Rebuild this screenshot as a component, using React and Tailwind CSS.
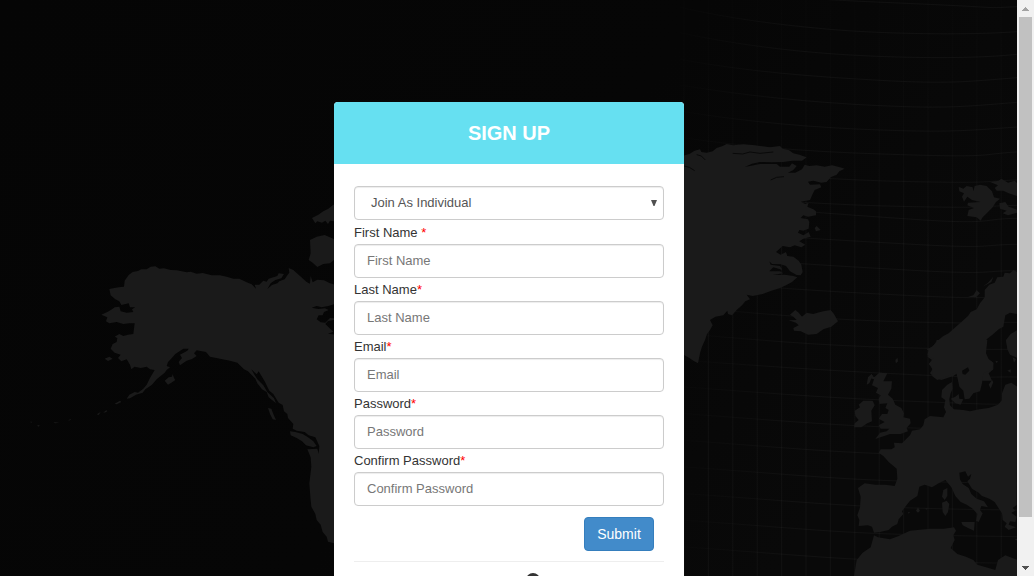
import React from "react";

const AMERICA =
  "M328 297 L356 292 L372 290 L374 272 L386 255 L398 246 L414 243 L424 238 L440 238 L452 230 L466 229 L478 236 L492 235 L512 240 L530 241 L560 247 L572 245 L590 251 L608 249 L635 256 L660 256 L680 260 L700 266 L718 266 L740 277 L755 283 L768 296 L764 284 L778 284 L790 272 L800 275 L806 266 L832 258 L836 250 L852 252 L844 265 L826 270 L812 280 L802 297 L816 285 L832 280 L838 274 L854 268 L862 256 L868 248 L866 234 L880 240 L900 258 L920 276 L930 281 L932 258 L938 277 L952 269 L972 271 L990 280 L1010 286 L1060 300 L1060 345 L1002 343 L985 348 L965 352 L950 348 L935 353 L955 357 L975 355 L986 360 L972 366 L968 376 L956 376 L950 388 L962 397 L976 398 L990 384 L1002 385 L1002 390 L984 393 L976 402 L1000 425 L984 431 L1060 440 L1060 1060 L1002 1060 L984 1055 L980 1040 L968 1026 L962 1004 L950 990 L946 972 L934 950 L931 920 L928 880 L934 830 L932 802 L922 778 L952 776 L956 792 L958 768 L946 742 L926 736 L914 726 L890 722 L878 716 L880 702 L864 684 L862 672 L852 664 L848 645 L836 638 L820 612 L808 602 L794 574 L776 544 L770 553 L754 538 L762 552 L772 568 L790 586 L802 606 L822 625 L828 640 L806 622 L800 606 L786 598 L772 580 L766 566 L744 544 L732 538 L712 518 L690 512 L660 506 L630 500 L618 486 L590 481 L582 490 L590 498 L576 507 L560 512 L540 526 L536 516 L546 504 L540 494 L562 482 L566 476 L550 476 L526 492 L512 508 L504 516 L500 528 L510 532 L500 540 L494 548 L470 568 L456 584 L436 598 L428 608 L408 614 L390 625 L380 626 L388 614 L404 606 L414 608 L430 596 L440 584 L450 564 L464 540 L450 538 L440 530 L422 534 L404 530 L394 538 L390 524 L380 508 L364 514 L354 504 L362 494 L344 488 L332 476 L338 462 L350 456 L352 444 L344 440 L358 432 L370 438 L384 434 L400 432 L404 400 L388 400 L370 402 L350 396 L328 400 L318 394 L322 382 L304 374 L322 366 L336 358 L344 352 L358 350 L362 364 L380 368 L400 366 L396 358 L406 352 L390 352 L386 340 L364 345 L358 334 L346 328 L332 316 Z M936 84 L955 74 L970 64 L985 56 L1000 44 L1060 30 L1060 100 L1002 94 L990 92 L984 102 L976 92 L966 98 L952 94 L946 100 Z M930 150 L950 140 L974 135 L1000 146 L1020 160 L1002 210 L990 220 L970 222 L952 231 L938 218 L926 210 L932 190 Z M494 572 L506 562 L516 560 L518 552 L522 564 L526 570 L514 578 L504 584 Z M314 506 L328 500 L338 506 L324 513 Z M804 654 L814 656 L820 672 L828 690 L818 688 L810 672 Z M870 724 L886 726 L908 732 L924 742 L940 754 L950 768 L940 772 L918 766 L906 754 L890 744 L872 736 Z M344 641 L360 632 L364 636 L350 643 Z M290 673 L302 666 L296 675 Z M310 668 L320 659 L320 666 Z M204 692 L212 686 L212 690 Z M112 704 L120 707 L114 710 Z M92 694 L97 697 L92 698 Z M160 696 L178 698 L166 700 Z";

const GREENLAND =
  "M0 90 L14 76 L28 72 L44 62 L60 58 L64 66 L80 68 L98 64 L110 54 L128 48 L140 42 L160 46 L190 43 L218 45 L246 49 L270 52 L300 48 L308 56 L326 60 L340 70 L358 74 L380 82 L366 92 L338 92 L310 96 L276 97 L240 96 L216 101 L194 111 L240 102 L290 102 L300 110 L328 110 L336 100 L350 108 L340 120 L324 128 L346 128 L366 118 L374 104 L388 108 L410 106 L434 110 L456 106 L480 112 L494 116 L478 124 L470 134 L452 142 L440 156 L424 158 L400 152 L384 155 L390 164 L420 163 L424 172 L404 180 L398 192 L390 210 L362 215 L376 222 L386 218 L382 230 L400 238 L408 244 L408 256 L384 260 L370 256 L362 264 L384 268 L388 276 L386 296 L370 302 L358 300 L354 308 L370 316 L386 306 L392 320 L370 326 L358 334 L376 344 L364 352 L344 346 L330 352 L308 348 L288 366 L302 374 L318 366 L322 378 L340 380 L356 392 L364 404 L368 426 L362 436 L350 435 L330 424 L318 408 L302 403 L276 402 L268 394 L272 404 L300 408 L308 420 L280 412 L268 424 L300 424 L310 430 L278 435 L314 434 L340 438 L352 442 L336 456 L318 466 L300 474 L270 484 L248 492 L218 498 L200 494 L210 508 L196 514 L186 526 L170 540 L156 556 L144 552 L142 542 L130 556 L106 560 L90 570 L98 586 L90 600 L80 614 L76 628 L66 650 L60 670 L54 700 L40 692 L28 684 L12 675 L0 660 Z M404 294 L410 288 L422 300 L408 304 Z M326 571 L350 570 L340 560 L330 554 L346 540 L356 548 L366 560 L380 548 L400 552 L412 548 L430 544 L452 540 L462 552 L474 574 L454 590 L430 598 L410 612 L384 614 L362 604 L342 602 L340 594 L356 586 L348 578 Z M836 170 L850 176 L860 168 L878 172 L880 184 L884 168 L900 164 L920 168 L936 184 L942 202 L960 206 L948 216 L938 232 L924 246 L908 262 L902 272 L890 262 L862 258 L866 240 L882 234 L862 226 L864 218 L902 216 L876 210 L862 200 L852 215 L846 200 L852 190 L838 184 Z M930 156 L956 152 L964 146 L984 158 L1004 152 L1012 160 L1012 198 L986 190 L970 182 L950 182 L944 174 L954 166 Z M958 220 L976 216 L986 230 L1004 236 L1012 240 L1012 248 L984 256 L968 250 L980 242 L960 236 Z M646 690 L652 684 L652 696 Z M188 70 L190 55 L192 70 Z";

const SCANDINAVIA =
  "M1012 426 L1000 420 L990 430 L974 428 L970 440 L952 442 L944 458 L928 464 L914 480 L914 502 L900 520 L890 538 L872 546 L864 558 L844 576 L826 592 L806 610 L790 618 L768 636 L758 650 L740 658 L756 668 L742 680 L756 690 L746 702 L758 716 L750 730 L766 744 L784 750 L820 738 L858 712 L862 724 L850 736 L862 752 L936 752 L926 730 L940 718 L940 698 L918 682 L914 656 L920 628 L940 612 L956 598 L970 590 L976 556 L990 548 L1012 552 Z M864 500 L880 496 L890 480 L900 490 L888 502 Z M908 470 L924 458 L940 440 L934 456 Z M978 630 L992 612 L1012 600 L1012 684 L990 674 L982 658 Z M568 744 L574 732 L582 742 L600 728 L618 730 L612 746 L600 752 Z";

const EUROPE =
  "M560 495 L548 504 L556 512 L544 518 L560 530 L556 546 L540 544 L536 554 L558 562 L536 570 L524 560 L530 550 L518 540 L516 520 L504 502 L494 486 L478 476 L456 468 L446 458 L426 446 L412 424 L420 416 L424 402 L414 410 L406 394 L388 398 L390 418 L398 432 L416 444 L424 462 L440 476 L462 484 L474 502 L454 498 L450 510 L458 520 L446 546 L438 542 L442 522 L428 506 L410 494 L392 486 L376 468 L364 442 L346 420 L326 430 L306 442 L284 434 L268 440 L262 468 L240 482 L226 500 L216 514 L220 522 L206 538 L202 552 L186 560 L176 570 L150 576 L132 578 L126 560 L114 556 L86 558 L88 540 L82 526 L90 502 L92 470 L84 444 L104 430 L136 434 L166 434 L194 438 L202 416 L200 386 L176 366 L160 348 L146 338 L152 328 L184 328 L194 322 L192 308 L216 310 L228 298 L240 286 L246 272 L270 268 L280 256 L284 238 L300 228 L340 232 L348 216 L342 202 L346 180 L334 172 L336 150 L352 134 L366 126 L368 146 L362 160 L358 178 L360 196 L372 208 L400 210 L420 214 L448 208 L476 204 L504 194 L516 180 L516 160 L526 134 L544 128 L562 140 Z M296 28 L318 10 L320 0 L472 0 L468 40 L476 58 L490 68 L488 90 L460 98 L456 130 L450 154 L430 160 L418 176 L404 178 L400 152 L388 140 L382 112 L378 96 L346 112 L322 120 L306 108 L308 90 L298 70 L310 56 L292 46 Z M362 176 L376 170 L386 162 L388 176 L400 178 L392 194 L376 190 Z M476 134 L486 120 L490 126 L482 146 Z M528 0 L562 0 L562 50 L544 44 L532 24 Z M548 52 L558 58 L552 68 Z M532 92 L542 88 L542 98 Z M496 62 L504 64 L500 70 Z M148 98 L172 100 L166 112 L160 124 L186 124 L184 146 L174 164 L188 176 L196 194 L214 204 L222 220 L220 232 L240 236 L242 250 L230 264 L234 274 L212 282 L180 282 L156 290 L136 297 L150 278 L170 274 L178 266 L152 266 L146 256 L164 246 L146 236 L156 222 L172 222 L176 210 L166 204 L172 190 L148 192 L146 176 L152 166 L138 158 L144 144 L126 136 L132 118 L140 106 Z M74 212 L90 202 L86 194 L100 182 L128 182 L134 196 L124 212 L126 244 L112 250 L94 262 L72 262 L74 250 L86 240 L76 228 Z M114 112 L124 102 L128 106 L118 130 L110 134 Z M196 62 L202 54 L204 64 L198 70 Z M340 450 L352 444 L352 468 L344 480 L336 470 Z M336 488 L350 482 L358 492 L354 516 L346 528 L338 516 Z M394 546 L420 546 L434 546 L432 572 L414 564 L398 556 Z M258 512 L264 502 L270 512 L264 518 Z M286 504 L294 506 L288 509 Z M234 516 L240 517 L236 521 Z M554 598 L562 596 L562 602 Z M72 708 L80 660 L98 638 L122 622 L132 586 L144 592 L180 598 L206 588 L240 572 L300 566 L342 566 L372 562 L378 572 L370 586 L374 600 L362 624 L382 642 L408 650 L430 660 L442 674 L468 682 L496 690 L504 660 L526 646 L562 660 L562 710 Z";

const MERIDIANS = Array.from({ length: 14 }, (_, i) => 683.5 + i * 24.4);

const PARALLELS = [
  "M0 -62 C200 -10 400 -2 700 11 S900 25 1011 20",
  "M0 22 C150 56 300 75 450 88 S850 107 1011 95",
  "M0 98 C150 130 300 150 450 161 S850 180 1011 163",
  "M0 178 C200 215 400 230 600 241 S850 246 1011 233",
  "M0 255 C200 288 400 308 600 317 S850 320 1011 307",
  "M0 333 C200 366 400 383 600 390 S850 393 1011 381",
  "M0 412 C250 448 450 458 700 465 S900 462 1011 456",
  "M0 492 C250 525 450 540 700 545 S900 544 1011 540",
  "M0 575 C250 602 450 615 700 620 S900 618 1011 616",
  "M0 600 C300 630 450 641 700 658 S900 656 1011 655",
  "M0 690 C300 710 450 719 700 733 S900 734 1011 733",
  "M0 765 C300 788 450 797 700 811 S900 812 1011 812",
  "M0 840 C300 866 450 875 700 887 S900 889 1011 889",
  "M0 920 C300 946 450 960 700 966 S900 967 1011 967",
  "M0 1000 C300 1026 450 1038 700 1044 S900 1048 1011 1048",
  "M0 1080 C300 1102 450 1112 700 1124 S900 1130 1011 1131",
  "M0 1160 C300 1182 450 1194 700 1204 S900 1212 1011 1213",
  "M0 1240 C300 1262 450 1276 700 1284 S900 1291 1011 1292",
  "M0 1320 C300 1342 450 1357 700 1364 S900 1370 1011 1371",
  "M0 1400 C300 1420 450 1438 700 1444 S900 1448 1011 1450",
  "M0 1480 C300 1500 450 1517 700 1524 S900 1528 1011 1530",
  "M0 1560 C300 1580 450 1598 700 1604 S900 1608 1011 1610",
  "M0 1640 C300 1660 450 1678 700 1684 S900 1688 1011 1690",
];

const FIELDS = [
  { label: "First Name ", placeholder: "First Name", type: "text" },
  { label: "Last Name", placeholder: "Last Name", type: "text" },
  { label: "Email", placeholder: "Email", type: "text" },
  { label: "Password", placeholder: "Password", type: "password" },
  { label: "Confirm Password", placeholder: "Confirm Password", type: "password" },
];

function WorldMap() {
  return (
    <svg className="absolute inset-0" width="1017" height="576" viewBox="0 0 1017 576" aria-hidden="true">
      <defs>
        <linearGradient id="sea" x1="0" y1="0" x2="1" y2="0.4">
          <stop offset="0" stopColor="#050505" />
          <stop offset="0.6" stopColor="#060606" />
          <stop offset="1" stopColor="#090909" />
        </linearGradient>
        <linearGradient id="fadeX" gradientUnits="userSpaceOnUse" x1="680" y1="0" x2="800" y2="0">
          <stop offset="0" stopColor="#ffffff" stopOpacity="0.005" />
          <stop offset="1" stopColor="#ffffff" stopOpacity="0.035" />
        </linearGradient>
        <linearGradient id="fadeParallel" gradientUnits="userSpaceOnUse" x1="0" y1="0" x2="360" y2="0">
          <stop offset="0" stopColor="#ffffff" stopOpacity="0.005" />
          <stop offset="1" stopColor="#ffffff" stopOpacity="0.035" />
        </linearGradient>
        <linearGradient id="fadeMeridian" gradientUnits="userSpaceOnUse" x1="0" y1="0" x2="0" y2="260">
          <stop offset="0" stopColor="#ffffff" stopOpacity="0.006" />
          <stop offset="0.5" stopColor="#ffffff" stopOpacity="0.015" />
          <stop offset="1" stopColor="#ffffff" stopOpacity="0.032" />
        </linearGradient>
      </defs>
      <rect width="1017" height="576" fill="url(#sea)" />
      <g fill="url(#fadeMeridian)">
        {MERIDIANS.map((x) => (
          <rect key={x} x={x} y="0" width="1" height="576" />
        ))}
      </g>
      <g transform="translate(680 0) scale(0.33333)" stroke="url(#fadeParallel)" strokeWidth="3" fill="none">
        {PARALLELS.map((d) => (
          <path key={d} d={d} />
        ))}
      </g>
      <g fill="#1a1a1a">
        <path transform="translate(0 190) scale(0.33333)" d={AMERICA} />
        <path transform="translate(680 130) scale(0.33333)" d={GREENLAND} />
        <path transform="translate(680 130) scale(0.33333)" d={SCANDINAVIA} />
        <path transform="translate(830 340) scale(0.33333)" d={EUROPE} />
      </g>
      <g transform="translate(830 340) scale(0.33333)" fill="#090909">
        <path d="M396 92 L414 82 L418 92 L406 104 L398 102 Z" />
      </g>
      <g transform="translate(680 130) scale(0.33333)" stroke="#090909" strokeWidth="3" fill="none">
        <path d="M12 108 L28 112 L44 122 M158 70 L188 72 L210 66 L240 70 L280 66 M272 150 L290 142 L312 140 M50 74 L64 78 L76 90" />
      </g>
    </svg>
  );
}

function Scrollbar() {
  return (
    <div className="flex h-full w-[17px] shrink-0 flex-col items-center bg-[#f1f1f1]">
      <div className="flex h-[17px] w-full shrink-0 items-center justify-center">
        <svg width="7" height="4" viewBox="0 0 7 4" fill="#a3a3a3" shapeRendering="crispEdges">
          <path d="M3 0h1v1h1v1h1v1h1v1H0V3h1V2h1V1h1z" />
        </svg>
      </div>
      <div className="h-[500px] w-[13px] shrink-0 bg-[#c1c1c1]" />
      <div className="flex-1" />
      <div className="flex h-[17px] w-full shrink-0 items-center justify-center">
        <svg width="7" height="4" viewBox="0 0 7 4" fill="#505050" shapeRendering="crispEdges">
          <path d="M0 0h7v1H6v1H5v1H4v1H3V3H2V2H1V1H0z" />
        </svg>
      </div>
    </div>
  );
}

export default function App() {
  return (
    <div className="flex h-[576px] w-[1034px] overflow-hidden bg-[#060606] font-['Liberation_Sans',Arial,sans-serif] text-[13px] text-[#333333]">
      <main className="relative flex h-full w-[1017px] shrink-0 justify-center overflow-hidden pt-[102px]">
        <WorldMap />
        <form className="relative ml-px h-[600px] w-[350px] shrink-0 rounded bg-white">
          <h1 className="flex h-[62px] items-center justify-center rounded-t bg-[#66e0f1] text-[20px] font-bold text-white">
            SIGN UP
          </h1>
          <div className="flex flex-col px-5 pt-[22px]">
            <div className="mb-px flex h-[34px] items-center justify-between rounded border border-[#cccccc] bg-white pr-[6px] pl-4 leading-5 text-[#555555] shadow-[inset_0_1px_1px_rgba(0,0,0,0.075)]">
              <span>Join As Individual</span>
              <svg width="6" height="6" viewBox="0 0 6 6" fill="#505050">
                <path d="M0 0h6L3.5 6h-1z" />
              </svg>
            </div>
            {FIELDS.map(({ label, placeholder, type }) => (
              <label key={placeholder} className="flex flex-col">
                <span className="h-[23px] leading-[23px] whitespace-pre">
                  {label}
                  <span className="text-[#ff0000]">*</span>
                </span>
                <input
                  type={type}
                  placeholder={placeholder}
                  className="h-[34px] w-full rounded border border-[#cccccc] bg-white px-3 pb-[2px] shadow-[inset_0_1px_1px_rgba(0,0,0,0.075)] outline-none placeholder:text-[#777777]"
                />
              </label>
            ))}
            <button
              type="button"
              className="mt-[11px] mr-[10px] h-[34px] w-[70px] self-end rounded border border-[#357ebd] bg-[#428bca] text-sm leading-5 text-white"
            >
              Submit
            </button>
            <div className="mt-[10px] border-t border-[#eeeeee]" />
            <div className="flex justify-center pt-[11px] pl-[47px]">
              <svg width="14" height="14" viewBox="0 0 14 14" fill="#333333">
                <circle cx="7" cy="7" r="7" />
              </svg>
            </div>
          </div>
        </form>
      </main>
      <Scrollbar />
    </div>
  );
}
